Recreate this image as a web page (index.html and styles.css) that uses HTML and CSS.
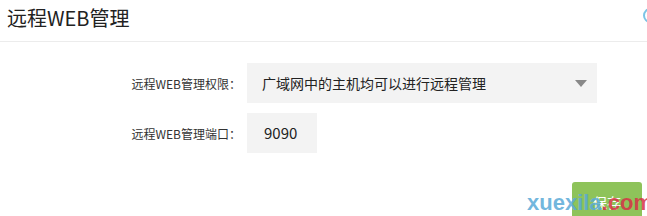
FILE: index.html
```html
<!DOCTYPE html>
<html lang="zh-CN">
<head>
    <meta charset="UTF-8">
    <title>远程WEB管理</title>
    <link rel="stylesheet" href="styles.css">
</head>
<body>
    <div class="panel">
        <div class="panel-head">
            <h1>远程WEB管理</h1>
            <span class="close-dot"></span>
        </div>
        <div class="form">
            <div class="row">
                <label>远程WEB管理权限：</label>
                <div class="select">
                    <span>广域网中的主机均可以进行远程管理</span>
                    <i class="arrow"></i>
                </div>
            </div>
            <div class="row">
                <label>远程WEB管理端口：</label>
                <div class="input">9090</div>
            </div>
        </div>
        <div class="foot">
            <button class="save-btn">保存</button>
        </div>
        <div class="watermark"><span class="wm-blue">xuexila</span><span class="wm-red">.com</span></div>
    </div>
</body>
</html>
```

FILE: styles.css
```css
body {
    margin: 0;
    padding: 0;
    font-family: "Noto Sans CJK SC", "Noto Sans", sans-serif;
    background-color: #fff;
    color: #333;
    overflow: hidden;
}
.panel {
    position: relative;
    width: 647px;
    height: 216px;
    overflow: hidden;
}
.panel-head {
    height: 41px;
    border-bottom: 1px solid #ececec;
    position: relative;
}
.panel-head h1 {
    margin: 0;
    padding: 4px 0 0 7px;
    font-size: 20px;
    font-weight: normal;
    line-height: 28px;
    color: #222;
}
.close-dot {
    position: absolute;
    right: -11px;
    top: 8px;
    width: 11px;
    height: 11px;
    border: 2px solid #7cc4e6;
    border-radius: 50%;
}
.form {
    padding-top: 21px;
}
.row {
    display: flex;
    align-items: center;
    margin-bottom: 10px;
}
.row label {
    width: 247px;
    text-align: right;
    box-sizing: border-box;
    padding-right: 6px;
    font-size: 12px;
    color: #333;
}
.select {
    width: 350px;
    height: 40px;
    background-color: #f3f3f3;
    display: flex;
    align-items: center;
    justify-content: space-between;
    box-sizing: border-box;
    padding: 0 10px 0 15px;
    font-size: 14px;
    color: #222;
}
.arrow {
    width: 0;
    height: 0;
    border-left: 6px solid transparent;
    border-right: 6px solid transparent;
    border-top: 7px solid #888;
}
.input {
    width: 70px;
    height: 40px;
    background-color: #f3f3f3;
    box-sizing: border-box;
    padding-left: 17px;
    line-height: 40px;
    font-size: 15px;
    color: #222;
}
.foot {
    display: flex;
    justify-content: flex-end;
    padding: 19px 5px 0 0;
}
.save-btn {
    width: 70px;
    height: 40px;
    border: none;
    border-radius: 3px;
    background-color: #8ec35a;
    color: #fff;
    font-family: inherit;
    font-size: 14px;
    padding: 0;
    line-height: 28px;
    align-self: flex-start;
}
.watermark {
    position: absolute;
    left: 527px;
    top: 192px;
    font-family: "Liberation Sans", Arial, sans-serif;
    font-weight: bold;
    font-size: 22px;
    line-height: 22px;
}
.wm-blue {
    color: rgba(90, 170, 215, 0.85);
}
.wm-red {
    color: rgba(215, 50, 70, 0.85);
}
```
